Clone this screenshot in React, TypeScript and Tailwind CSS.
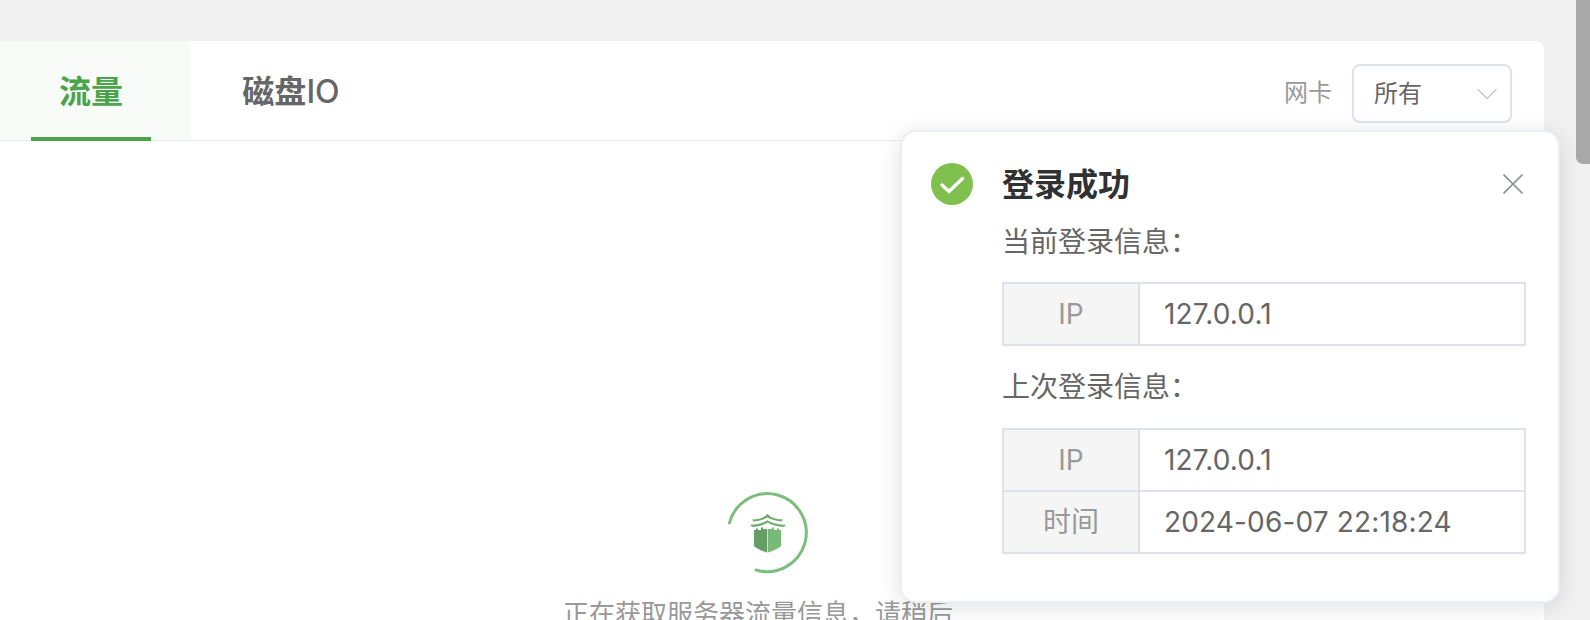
import React from "react";

const font = { fontFamily: '"Inter","Noto Sans CJK SC",sans-serif' };

function Row({ label, value, last, tall }: { label: string; value: string; last?: boolean; tall?: boolean }) {
  return (
    <div className={`flex ${tall ? "h-[62px]" : "h-[60px]"} ${last ? "" : "border-b-2 border-[#dfe2ea]"}`}>
      <div className="flex w-[136px] items-center justify-center border-r-2 border-[#dfe2ea] bg-[#f5f5f6] text-[#999]">{label}</div>
      <div className="flex flex-1 items-center pl-[24px] tracking-[0.15px] text-[#666]">{value}</div>
    </div>
  );
}

function InfoTable({ rows }: { rows: [string, string][] }) {
  return (
    <div className="w-[524px] border-2 border-[#dfe2ea]">
      {rows.map((r, i) => (
        <Row key={i} label={r[0]} value={r[1]} last={i === rows.length - 1} tall={rows.length > 1 && i === 0} />
      ))}
    </div>
  );
}

function Logo() {
  return (
    <svg viewBox="0 0 36 40" className="h-[40px] w-[36px]">
      <path d="M2 6.5 C9 6.3 14.5 4.5 17.5 0.8 C20.5 4.5 26 6.3 33 6.5 L31.5 8.4 C26 8.2 21 6.6 17.5 4.6 C14 6.6 9 8.2 3.5 8.4 Z" fill="#6fae71" />
      <path d="M0 11.8 C7 11.8 13 10 17.5 7.2 C22 10 28 11.8 36 11.8 L34 14 C27 13.8 21.5 12 17.5 9.8 C13.5 12 8 13.8 2 14 Z" fill="#6fae71" />
      <path d="M4 17 H6 V15.5 H8 V17 H11 V14.5 H13 V16 H17.2 V39.5 C12 38 7 36 4 33 Z" fill="#659f66" />
      <path d="M17.8 16 H22 V14.5 H24 V17 H27 V15.5 H29 V17 H31 V33 C28 36 23 38 17.8 39.5 Z" fill="#78b978" />
    </svg>
  );
}

export default function App() {
  return (
    <div style={font} className="relative h-[620px] w-[1590px] overflow-hidden bg-[#f1f1f2]">
      <div className="pt-[41px] pr-[46px]">
        <div className="-ml-[9px] h-[579px] rounded-t-[8px] bg-white">
          <div className="flex h-[100px] items-stretch justify-between border-b border-[#e8eaf0]">
            <div className="flex">
              <div className="relative flex w-[200px] items-center justify-center bg-[#f9fbf8] text-[32px] font-bold text-[#4aa44a]">
                <span className="relative top-[1px]">流量</span>
                <div className="absolute bottom-[-1px] left-[40px] h-[4px] w-[120px] bg-[#4aa44a]" />
              </div>
              <div className="flex w-[200px] items-center justify-center text-[32px] font-bold text-[#666]">
                <span className="relative top-[1px]">磁盘<span className="font-medium">IO</span></span>
              </div>
            </div>
            <div className="flex items-start pt-[23px] pr-[32px] text-[24px]">
              <span className="mt-[11px] mr-[20px] text-[#999]">网卡</span>
              <div className="flex h-[59px] w-[160px] items-center justify-between rounded-[8px] border-2 border-[#dfe2ea] pr-[13px] pl-[20px] text-[#666]">
                <span>所有</span>
                <svg viewBox="0 0 20 12" className="h-[12px] w-[20px]" fill="none" stroke="#c4c7ce" strokeWidth="1.4">
                  <path d="M0.5 1 L10 10.5 L19.5 1" />
                </svg>
              </div>
            </div>
          </div>
          <div className="flex flex-col items-center pt-[351px] pr-[19px]">
            <div className="relative ml-[20px] flex h-[82px] w-[82px] items-center justify-center">
              <svg viewBox="0 0 82 82" className="absolute inset-0 h-[82px] w-[82px]" fill="none" stroke="#7cbc7e" strokeWidth="3" strokeLinecap="round">
                <path d="M2.5 31 A39 39 0 1 1 29 78" />
              </svg>
              <Logo />
            </div>
            <div className="mt-[22px] text-[26px] leading-[36px] text-[#999]">正在获取服务器流量信息，请稍后</div>
          </div>
        </div>
      </div>

      {/* notification */}
      <div className="absolute top-[130px] left-[900px] h-[473px] w-[660px] rounded-[16px] border-2 border-[#ebeef5] bg-white shadow-[0_4px_24px_rgba(0,0,0,0.12)]">
        <div className="flex pt-[31px] pl-[29px]">
          <div className="h-[42px] w-[42px] rounded-full bg-[#80c04f]">
            <svg viewBox="0 0 42 42" className="h-[42px] w-[42px]" fill="none" stroke="white" strokeWidth="3.4" strokeLinecap="round" strokeLinejoin="round">
              <path d="M11 22 L18 28.5 L31.5 15.5" />
            </svg>
          </div>
          <div className="ml-[29px] text-[28px] text-[#666]">
            <div className="h-[44px] text-[32px] leading-[44px] font-bold text-[#303133]">登录成功</div>
            <div className="mt-[15px] h-[40px] leading-[40px]">当前登录信息：</div>
            <div className="mt-[20px]"><InfoTable rows={[["IP", "127.0.0.1"]]} /></div>
            <div className="mt-[21px] h-[40px] leading-[40px]">上次登录信息：</div>
            <div className="mt-[21px]">
              <InfoTable rows={[["IP", "127.0.0.1"], ["时间", "2024-06-07 22:18:24"]]} />
            </div>
          </div>
        </div>
        <svg viewBox="0 0 20 20" className="absolute top-[42px] right-[35px] h-[20px] w-[20px]" fill="none" stroke="#909399" strokeWidth="1.6">
          <path d="M0.5 0.5 L19.5 19.5 M19.5 0.5 L0.5 19.5" />
        </svg>
      </div>

      {/* scrollbar */}
      <div className="absolute top-0 right-0 h-[164px] w-[14px] rounded-bl-[7px] bg-[#a9a9a9]" />
    </div>
  );
}
